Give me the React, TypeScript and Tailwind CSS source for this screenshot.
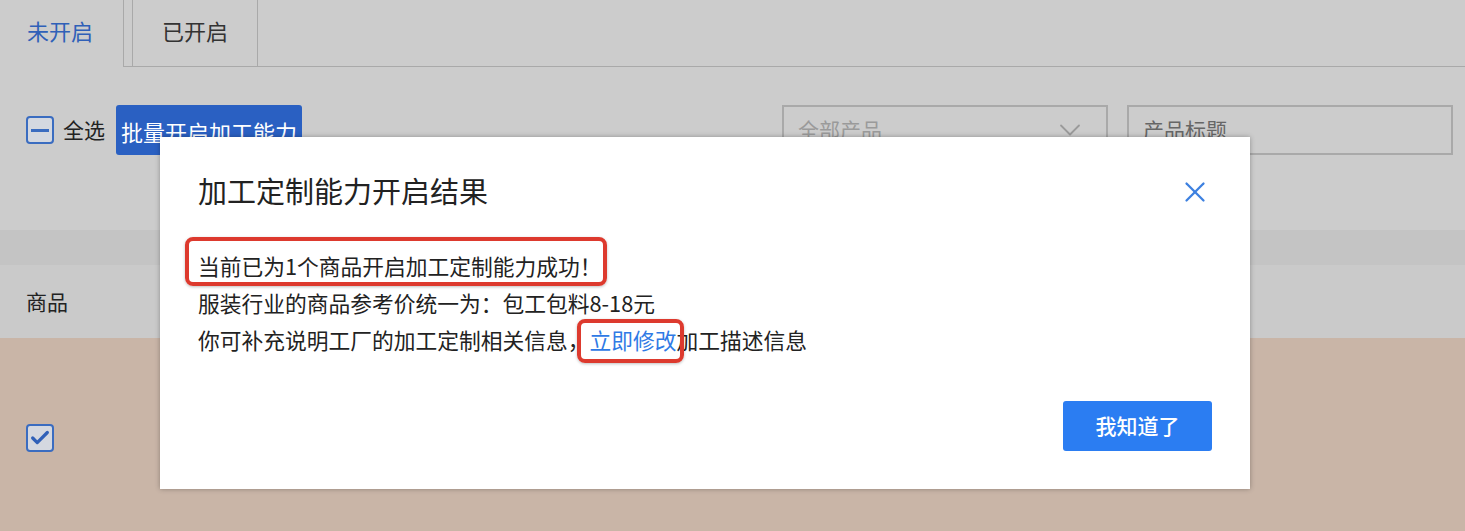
import { X, ChevronDown, Check } from "lucide-react";

export default function App() {
  return (
    <div className="relative w-full h-[531px] overflow-hidden bg-[#cccccc] font-['Noto_Sans_CJK_SC','Noto_Sans',sans-serif] text-[#222]">
      {/* tabs */}
      <div className="flex h-[67px]">
        <div className="w-[124px] border-r border-[#a9a9a9] pl-[27px] pt-[14px] text-[22px] text-[#2f60b8]">未开启</div>
        <div className="w-[8px] border-b border-[#a9a9a9]" />
        <div className="w-[126px] border-x border-b border-[#a9a9a9] pt-[14px] text-center text-[22px] text-[#333]">已开启</div>
        <div className="flex-1 border-b border-[#a9a9a9]" />
      </div>

      {/* toolbar */}
      <div className="mt-[38px] flex h-[50px] items-center pl-[26px] pr-[12px]">
        <div className="flex h-[28px] w-[28px] items-center justify-center rounded-[4px] border-2 border-[#3a6cc0] bg-[#d4d8e0]">
          <div className="h-[3px] w-[18px] bg-[#3a6cc0]" />
        </div>
        <span className="ml-[9px] text-[21px] text-[#222]">全选</span>
        <div className="ml-[11px] flex h-[50px] w-[186px] items-start justify-center rounded-[3px] bg-[#2a60c2] pt-[10px] text-[22px] text-white">批量开启加工能力</div>
        <div className="flex-1" />
        <div className="flex h-[50px] w-[326px] items-center justify-between border-2 border-[#a9a9a9] pl-[14px] pr-[18px] text-[21px] text-[#9a9a9a]">
          <span>全部产品</span>
          <ChevronDown size={36} strokeWidth={1.2} className="text-[#9a9a9a]" />
        </div>
        <div className="ml-[19px] flex h-[50px] w-[326px] items-center border-2 border-[#a9a9a9] pl-[14px] text-[21px] text-[#666]">产品标题</div>
      </div>

      {/* table */}
      <div className="mt-[75px] h-[35px] bg-[#c4c4c4]" />
      <div className="flex h-[73px] items-center bg-[#cacaca] pl-[26px] text-[21px] text-[#222]">商品</div>
      <div className="h-[200px] bg-[#c9b5a7] pl-[26px] pt-[86px]">
        <div className="flex h-[28px] w-[28px] items-center justify-center rounded-[4px] border-2 border-[#3a6cc0] bg-[#d4d8e0]">
          <Check size={22} strokeWidth={3.5} className="text-[#2f60b8]" />
        </div>
      </div>

      {/* modal */}
      <div className="absolute left-[160px] top-[137px] flex h-[352px] w-[1090px] flex-col bg-white pl-[38px] pr-[38px] pt-[31px] shadow-[0_0_5px_rgba(0,0,0,0.3)]">
        <X size={34} strokeWidth={1.6} className="absolute right-[38px] top-[38px] text-[#3d80e0]" />
        <div className="text-[29px] leading-[44px] text-[#222]">加工定制能力开启结果</div>
        <div className="mt-[35px] text-[21.75px] leading-[37px] text-[#222]">
          <div>
            <span className="relative">
              当前已为1个商品开启加工定制能力成功！
              <span className="absolute -left-[13px] -right-[5px] -top-[13px] -bottom-[5px] rounded-[8px] border-[4px] border-[#dd3a2e] shadow-[0_1px_3px_rgba(0,0,0,0.25)]" />
            </span>
          </div>
          <div>服装行业的商品参考价统一为：包工包料8-18元</div>
          <div>
            你可补充说明工厂的加工定制相关信息，
            <span className="relative text-[#2f7ae5]">
              立即修改
              <span className="absolute -left-[13px] -right-[7px] -top-[5px] -bottom-[8px] rounded-[8px] border-[4px] border-[#dd3a2e] shadow-[0_1px_3px_rgba(0,0,0,0.25)]" />
            </span>
            加工描述信息
          </div>
        </div>
        <div className="mt-[43px] flex justify-end">
          <div className="flex h-[50px] w-[149px] items-center justify-center rounded-[3px] bg-[#2b7df2] text-[21px] font-medium text-white">我知道了</div>
        </div>
      </div>
    </div>
  );
}
